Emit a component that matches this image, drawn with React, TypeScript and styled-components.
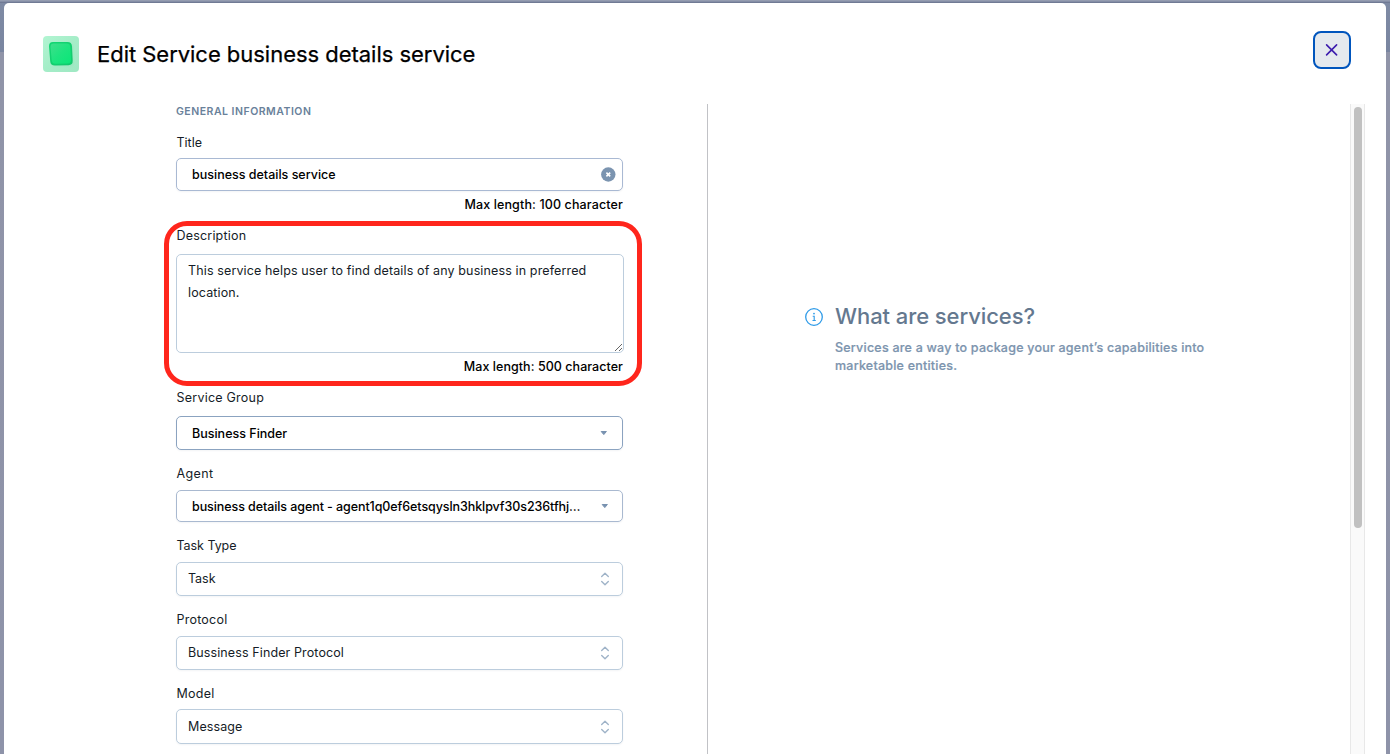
import React from 'react';
import styled, { createGlobalStyle } from 'styled-components';

const GlobalStyle = createGlobalStyle`
  * { box-sizing: border-box; }
  body {
    margin: 0;
    font-family: Inter, "Liberation Sans", sans-serif;
    font-size: 12.5px;
    color: #151c27;
    overflow: hidden;
  }
`;

const Backdrop = styled.div`
  height: 754px;
  padding: 3px 4px 0;
  overflow: hidden;
  background:
    linear-gradient(#949cb0 0 1px, #858ea6 1px 2px, #707a94 2px 3px, transparent 3px),
    linear-gradient(#7f8ba4 0, #7985a0 52px, #9094a8 52px, #8e93a9 100%);
`;

const Modal = styled.section`
  display: flex;
  flex-direction: column;
  height: 751px;
  background: #fff;
  border-radius: 5px 5px 0 0;
`;

const Header = styled.header`
  display: flex;
  align-items: flex-start;
  flex: none;
  height: 101px;
  padding: 28px 35px 0 39px;
`;

const Logo = styled.svg`
  flex: none;
  margin-top: 5px;
`;

const Heading = styled.h1`
  flex: 1;
  margin: 9px 0 0 18px;
  font-size: 22px;
  font-weight: 400;
  line-height: 28px;
  letter-spacing: -0.03px;
  color: #000;
  -webkit-text-stroke: 0.25px #000;
`;

const CloseButton = styled.button`
  display: grid;
  place-items: center;
  width: 38px;
  height: 38px;
  padding: 0;
  border: 2px solid #0055bd;
  border-radius: 8px;
  background: #e4e9ee;
`;

const Body = styled.div`
  display: flex;
  flex: 1;
  min-height: 0;
  padding-right: 21px;
`;

const FormPane = styled.form`
  width: 704px;
  flex: none;
  padding: 0 85px 0 172px;
  border-right: 1px solid #c1c2c6;
  margin: 0;
`;

const InfoPane = styled.aside`
  display: flex;
  align-items: flex-start;
  flex: 1;
  padding: 198px 0 0 97px;
`;

const ScrollTrack = styled.div`
  width: 15px;
  padding: 3px 2px 0 3px;
  border: solid #e8e8e8;
  border-width: 0 1px;
  background: #fafafa;
`;

const ScrollThumb = styled.div`
  width: 8px;
  height: 421px;
  border-radius: 4px;
  background: #c1c1c1;
`;

const SectionTitle = styled.h2`
  height: 31px;
  margin: 0;
  font-size: 10.5px;
  font-weight: 600;
  line-height: 15px;
  letter-spacing: 0.5px;
  color: #69819a;
`;

const Field = styled.div`
  position: relative;
  margin-bottom: 16px;
`;

const Label = styled.label<{ $gap?: number; $track?: number }>`
  display: block;
  height: 16px;
  margin-bottom: ${(p) => p.$gap ?? 8}px;
  padding-left: 0.5px;
  line-height: 16px;
  letter-spacing: ${(p) => p.$track ?? 0.23}px;
`;

const Control = styled.div<{ $height: number; $tone?: string; $inset?: number }>`
  display: flex;
  align-items: center;
  justify-content: space-between;
  width: 447px;
  height: ${(p) => p.$height}px;
  padding: 0 12px 0 ${(p) => p.$inset ?? 11}px;
  border: 1px solid ${(p) => p.$tone ?? '#bccddd'};
  border-radius: 5px;
  background: #fff;
  box-shadow: 0 1px 2px rgba(20, 40, 80, 0.05);
`;

const Value = styled.span<{ $strong?: boolean; $track?: number; $drop?: number }>`
  white-space: nowrap;
  padding-top: ${(p) => p.$drop ?? 0}px;
  line-height: 18px;
  font-weight: ${(p) => (p.$strong ? 500 : 400)};
  color: ${(p) => (p.$strong ? '#000' : '#151c27')};
  letter-spacing: ${(p) => p.$track ?? 0}px;
`;

const TextArea = styled.textarea`
  display: block;
  width: 448px;
  height: 99px;
  padding: 5px 11px;
  border: 1px solid #bccddd;
  border-radius: 5px;
  outline: none;
  resize: vertical;
  font: 400 12.5px/22px Inter, "Liberation Sans", sans-serif;
  letter-spacing: 0.13px;
  color: #151c27;
`;

const Hint = styled.p<{ $track: number }>`
  width: 447px;
  height: 16px;
  margin: 5px 0 0;
  line-height: 17px;
  font-weight: 500;
  text-align: right;
  letter-spacing: ${(p) => p.$track}px;
  color: #000;
`;

const Highlight = styled.div`
  position: absolute;
  left: -12px;
  top: -7px;
  width: 478px;
  height: 165px;
  border: 5px solid #ff261c;
  border-radius: 23px;
  pointer-events: none;
`;

const Arrow = styled.svg<{ $shift?: number }>`
  flex: none;
  margin-right: ${(p) => p.$shift ?? 0}px;
`;

const InfoIcon = styled.svg`
  flex: none;
  margin: 6px 12px 0 0;
`;

const InfoTitle = styled.h2`
  margin: 1px 0 9px;
  font-size: 22px;
  font-weight: 500;
  line-height: 27px;
  letter-spacing: -0.08px;
  color: #64788f;
`;

const InfoText = styled.p`
  margin: 0;
  font-weight: 500;
  line-height: 18px;
  letter-spacing: 0.22px;
  color: #7c94ae;
  -webkit-text-stroke: 0.2px #7c94ae;
`;

const Caret = ({ shift }: { shift: number }) => (
  <Arrow $shift={shift} width="8" height="5" viewBox="0 0 8 5">
    <path d="M1.2.5h5.2L3.8 3.6z" fill="#7892b0" stroke="#7892b0" strokeLinejoin="round" />
  </Arrow>
);

const UpDown = () => (
  <Arrow width="10" height="14" viewBox="0 0 10 14" fill="none" stroke="#9fb3c8" strokeWidth="1.4" strokeLinecap="round" strokeLinejoin="round">
    <path d="M1.7 4.4 5 1.3l3.300 3.100M1.700 9.600 5 12.700l3.300-3.100" />
  </Arrow>
);

export default function App() {
  return (
    <>
      <GlobalStyle />
      <Backdrop>
        <Modal>
          <Header>
            <Logo width="36" height="36" viewBox="0 0 36 36">
              <defs>
                <linearGradient id="tile" x1="0" y1="0" x2="1" y2="1">
                  <stop offset="0" stopColor="#b2f5d2" />
                  <stop offset="0.5" stopColor="#a5edc8" />
                  <stop offset="1" stopColor="#9fe8c3" />
                </linearGradient>
                <linearGradient id="gem" x1="0" y1="0" x2="1" y2="1">
                  <stop offset="0" stopColor="#3edf8b" />
                  <stop offset="0.5" stopColor="#1de47f" />
                  <stop offset="1" stopColor="#0be678" />
                </linearGradient>
                <linearGradient id="rim" x1="0" y1="0" x2="1" y2="1">
                  <stop offset="0" stopColor="#12d873" />
                  <stop offset="1" stopColor="#12c86c" />
                </linearGradient>
                <filter id="glow" x="-30%" y="-30%" width="160%" height="160%">
                  <feGaussianBlur stdDeviation="1.8" />
                </filter>
              </defs>
              <rect width="36" height="36" rx="4" fill="url(#tile)" />
              <path d="M9 9h20v20H12z" fill="#80d9ab" opacity="0.6" filter="url(#glow)" />
              <path d="M10 6h14.500q4.300 0 4.500 4.300l.7 14.300q.2 4.600-4.200 4.700l-13.700.3q-4.300 0-4.600-4.300L6 10.300Q5.900 6 10 6z" fill="url(#rim)" />
              <path d="M10.800 7.500h12.900q3.400 0 3.600 3.400l.7 12.800q.2 3.700-3.400 3.800l-12 .3q-3.600 0-3.900-3.600L7.500 10.900q0-3.400 3.300-3.400z" fill="url(#gem)" />
            </Logo>
            <Heading>Edit Service business details service</Heading>
            <CloseButton type="button" aria-label="Close">
              <svg width="14" height="14" viewBox="0 0 14 14" stroke="#3c1cad" strokeWidth="1.600" strokeLinecap="round">
                <path d="M1.600 1.900 11.600 11.900M11.600 1.900 1.600 11.900" />
              </svg>
            </CloseButton>
          </Header>
          <Body>
            <FormPane>
              <SectionTitle>GENERAL INFORMATION</SectionTitle>
              <Field>
                <Label $gap={7} $track={-0.02}>Title</Label>
                <Control $height={33} $tone="#a9b9d3" $inset={15}>
                  <Value $strong>business details service</Value>
                  <Arrow $shift={-7} width="16" height="16" viewBox="0 0 16 16">
                    <circle cx="7.300" cy="7.500" r="7.200" fill="#7b94b0" />
                    <path d="m5.400 5.600 3.800 3.800m0-3.800-3.800 3.800" stroke="#fff" strokeWidth="1.600" />
                  </Arrow>
                </Control>
                <Hint $track={0.13}>Max length: 100 character</Hint>
              </Field>
              <Field>
                <Label $gap={10} $track={0.19}>Description</Label>
                <TextArea spellCheck={false} defaultValue="This service helps user to find details of any business in preferred location." />
                <Hint $track={0.05}>Max length: 500 character</Hint>
                <Highlight />
              </Field>
              <Field>
                <Label $gap={10}>Service Group</Label>
                <Control $height={34} $tone="#8ba3c0" $inset={15}>
                  <Value $strong $drop={2}>Business Finder</Value>
                  <Caret shift={2} />
                </Control>
              </Field>
              <Field>
                <Label $track={0.4}>Agent</Label>
                <Control $height={32} $tone="#a9b9d0" $inset={15}>
                  <Value $strong $drop={2} $track={-0.08}>business details agent - agent1q0ef6etsqysln3hklpvf30s236tfhj…</Value>
                  <Caret shift={1} />
                </Control>
              </Field>
              <Field>
                <Label $track={-0.05}>Task Type</Label>
                <Control $height={34}>
                  <Value $track={-0.04}>Task</Value>
                  <UpDown />
                </Control>
              </Field>
              <Field>
                <Label>Protocol</Label>
                <Control $height={34}>
                  <Value $track={0.11}>Bussiness Finder Protocol</Value>
                  <UpDown />
                </Control>
              </Field>
              <Field>
                <Label $gap={7}>Model</Label>
                <Control $height={35}>
                  <Value $track={0.1}>Message</Value>
                  <UpDown />
                </Control>
              </Field>
            </FormPane>
            <InfoPane>
              <InfoIcon width="18" height="18" viewBox="0 0 18 18" fill="none" stroke="#2f9be8">
                <circle cx="9" cy="9" r="8.300" strokeWidth="1.300" />
                <path d="M7.700 8.200h1.500v4.200M7.500 12.500h3.300" strokeWidth="1.100" />
                <circle cx="9" cy="5.600" r="0.900" fill="#2f9be8" stroke="none" />
              </InfoIcon>
              <div>
                <InfoTitle>What are services?</InfoTitle>
                <InfoText>
                  Services are a way to package your agent’s capabilities into
                  <br />
                  marketable entities.
                </InfoText>
              </div>
            </InfoPane>
            <ScrollTrack>
              <ScrollThumb />
            </ScrollTrack>
          </Body>
        </Modal>
      </Backdrop>
    </>
  );
}
